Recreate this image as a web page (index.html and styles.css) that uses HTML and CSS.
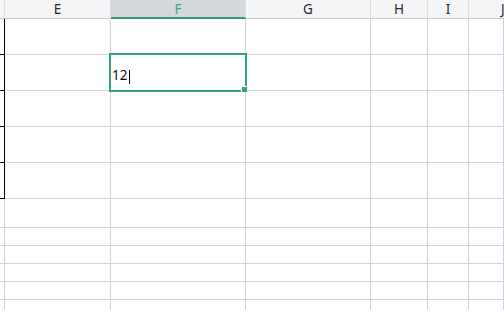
FILE: index.html
```html
<!DOCTYPE html>
<html>
<head>
<meta charset="utf-8">
<link rel="stylesheet" href="styles.css">
</head>
<body>
<div class="sheet">
  <div class="hd hd-edge"></div>
  <div class="hd">E</div>
  <div class="hd hd-sel">F</div>
  <div class="hd">G</div>
  <div class="hd">H</div>
  <div class="hd">I</div>
  <div class="hd hd-cut">J</div>

  <div class="c edge-b"></div><div class="c"></div><div class="c"></div><div class="c"></div><div class="c"></div><div class="c"></div><div class="c"></div>
  <div class="c edge-b"></div><div class="c"></div><div class="c val"><span>12</span><span class="caret"></span></div><div class="c"></div><div class="c"></div><div class="c"></div><div class="c"></div>
  <div class="c edge-b"></div><div class="c"></div><div class="c"></div><div class="c"></div><div class="c"></div><div class="c"></div><div class="c"></div>
  <div class="c edge-b"></div><div class="c"></div><div class="c"></div><div class="c"></div><div class="c"></div><div class="c"></div><div class="c"></div>
  <div class="c edge-b"></div><div class="c"></div><div class="c"></div><div class="c"></div><div class="c"></div><div class="c"></div><div class="c"></div>

  <div class="c"></div><div class="c"></div><div class="c"></div><div class="c"></div><div class="c"></div><div class="c"></div><div class="c"></div>
  <div class="c"></div><div class="c"></div><div class="c"></div><div class="c"></div><div class="c"></div><div class="c"></div><div class="c"></div>
  <div class="c"></div><div class="c"></div><div class="c"></div><div class="c"></div><div class="c"></div><div class="c"></div><div class="c"></div>
  <div class="c"></div><div class="c"></div><div class="c"></div><div class="c"></div><div class="c"></div><div class="c"></div><div class="c"></div>
  <div class="c"></div><div class="c"></div><div class="c"></div><div class="c"></div><div class="c"></div><div class="c"></div><div class="c"></div>
  <div class="c"></div><div class="c"></div><div class="c"></div><div class="c"></div><div class="c"></div><div class="c"></div><div class="c"></div>

  <div class="selection"><div class="handle"></div></div>
</div>
</body>
</html>
```

FILE: styles.css
```css
html, body {
  margin: 0;
  padding: 0;
  background: #ffffff;
  overflow: hidden;
}

.sheet {
  position: relative;
  display: grid;
  grid-template-columns: 5px 106px 135px 125px 57px 41px 35px;
  grid-template-rows: 19px repeat(5, 36px) 29px repeat(5, 18px);
  width: 504px;
  height: 310px;
  overflow: hidden;
  font-family: "Noto Sans", "Open Sans", sans-serif;
}

.hd {
  box-sizing: border-box;
  background: #f4f5f7;
  border-right: 1px solid #dcdee2;
  border-bottom: 1px solid #c9ccd1;
  color: #2a2a2a;
  font-size: 13.5px;
  line-height: 16px;
  text-align: center;
  padding-top: 1px;
}

.hd-cut {
  text-align: left;
  padding-left: 32px;
  border-right: none;
  overflow: hidden;
  white-space: nowrap;
}

.hd-sel {
  background: #d5d8dd;
  color: #3fa97c;
  border-bottom: 2px solid #2f9f6d;
}

.c {
  box-sizing: border-box;
  border-right: 1px solid #d0d3d7;
  border-bottom: 1px solid #d0d3d7;
}

.edge-b {
  border-right-color: #000000;
  border-bottom-color: #000000;
}

.val {
  display: flex;
  align-items: flex-end;
  padding: 0 0 7px 1px;
  font-size: 13.5px;
  line-height: 16px;
  color: #111111;
}

.caret {
  display: inline-block;
  width: 1px;
  height: 14px;
  margin-left: 2px;
  margin-bottom: -1px;
  background: #000000;
}

.selection {
  position: absolute;
  left: 109px;
  top: 53px;
  width: 138px;
  height: 39px;
  box-sizing: border-box;
  border: 2px solid #35a475;
}

.handle {
  position: absolute;
  right: -2px;
  bottom: -2px;
  width: 5px;
  height: 5px;
  background: #35a475;
  border-left: 1px solid #ffffff;
  border-top: 1px solid #ffffff;
}
```
